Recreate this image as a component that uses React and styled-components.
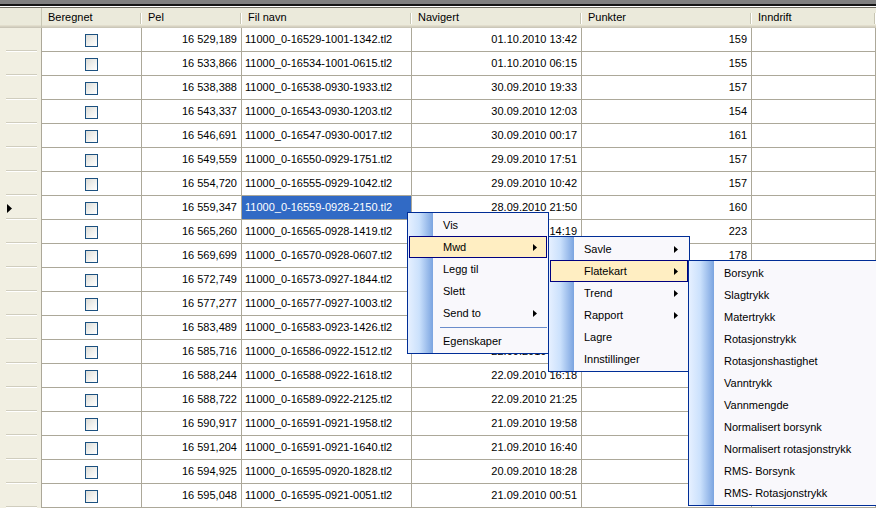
import React from "react";
import styled, { createGlobalStyle } from "styled-components";

const COLS = "42px 100px 100px 170px 170px 170px 1fr";
const GRID_LINE = "#aca899";

const GlobalStyle = createGlobalStyle`
  html, body {
    margin: 0;
    padding: 0;
    background: #fff;
  }
  body {
    font-family: "Liberation Sans", Arial, sans-serif;
    font-size: 11px;
    color: #000;
    overflow: hidden;
  }
`;

const Screen = styled.div`
  position: relative;
  width: 876px;
  height: 509px;
  overflow: hidden;
  background: #fff;
`;

const FrameEdge = styled.div`
  height: 8px;
  background: linear-gradient(
    to bottom,
    #808080 0 4px,
    #141414 4px 6px,
    #ffffff 6px 7px,
    #716f64 7px 8px
  );
`;

const HeaderRow = styled.div`
  display: grid;
  grid-template-columns: ${COLS};
  height: 20px;
`;

const HeaderCell = styled.div`
  position: relative;
  padding-left: 6px;
  line-height: 18px;
  white-space: nowrap;
  overflow: hidden;
  background: linear-gradient(
    to bottom,
    #ebeadb 0 17px,
    #e2decd 17px 18px,
    #d6d2c2 18px 19px,
    #cbc7b8 19px 20px
  );

  &::after {
    content: "";
    position: absolute;
    right: 0;
    top: 5px;
    bottom: 4px;
    width: 0;
    border-left: 1px solid #c7c5b2;
    border-right: 1px solid #fff;
  }
`;

const CornerCell = styled(HeaderCell)`
  box-sizing: border-box;
  border-right: 1px solid #c7c5b2;
  &::after {
    display: none;
  }
`;

const Row = styled.div`
  display: grid;
  grid-template-columns: ${COLS};
  height: 24px;
`;

const RowHeader = styled.div`
  box-sizing: border-box;
  display: flex;
  align-items: center;
  padding-left: 7px;
  border-right: 1px solid ${GRID_LINE};
  background:
    linear-gradient(#d0cdbe, #d0cdbe) 6px calc(100% - 1px) / 31px 1px no-repeat,
    linear-gradient(#fff, #fff) 6px 100% / 31px 1px no-repeat,
    #f1efe2;
`;

const Cell = styled.div`
  box-sizing: border-box;
  border-right: 1px solid ${GRID_LINE};
  border-bottom: 1px solid ${GRID_LINE};
  padding: 0 ${(p) => (p.$align === "right" ? "4px" : "3px")};
  line-height: 23px;
  text-align: ${(p) => p.$align || "left"};
  white-space: nowrap;
  overflow: hidden;
  background: ${(p) => (p.$selected ? "#316ac5" : "#fff")};
  color: ${(p) => (p.$selected ? "#fff" : "#000")};
`;

const CheckCell = styled(Cell)`
  display: flex;
  align-items: center;
  justify-content: center;
  padding: 1px 0 0;
`;

const Check = styled.span`
  box-sizing: border-box;
  width: 13px;
  height: 13px;
  border: 1px solid #1c5180;
  background: linear-gradient(135deg, #dcdcd7 0%, #f1f1ee 55%, #fff 100%);
`;

const Menu = styled.div`
  position: absolute;
  left: ${(p) => p.$left}px;
  top: ${(p) => p.$top}px;
  width: ${(p) => p.$width}px;
  z-index: ${(p) => p.$layer};
  box-sizing: border-box;
  padding: 1px;
  border: 1px solid #002d96;
  background:
    linear-gradient(to right, #e6f0ff 0%, #cbe1fc 45%, #7ba4e0 100%) 0 0 / 25px 100% no-repeat,
    #f9f8fc;
`;

const MenuItem = styled.div`
  box-sizing: border-box;
  height: 22px;
  display: flex;
  align-items: center;
  padding: 0 9px 0 33px;
  border: 1px solid ${(p) => (p.$active ? "#000080" : "transparent")};
  background: ${(p) => (p.$active ? "#ffeec2" : "transparent")};
  white-space: nowrap;
`;

const MenuSeparator = styled.div`
  height: 6px;
  margin-left: 31px;
  background: linear-gradient(#6a8ccb, #6a8ccb) 0 3px / 100% 1px no-repeat;
`;

const Arrow = styled.svg`
  margin-left: auto;
  flex: none;
`;

const columns = ["Beregnet", "Pel", "Fil navn", "Navigert", "Punkter", "Inndrift"];

// cells that sit fully under the open menus are left empty
const rows = [
  ["16 529,189", "11000_0-16529-1001-1342.tl2", "01.10.2010 13:42", "159"],
  ["16 533,866", "11000_0-16534-1001-0615.tl2", "01.10.2010 06:15", "155"],
  ["16 538,388", "11000_0-16538-0930-1933.tl2", "30.09.2010 19:33", "157"],
  ["16 543,337", "11000_0-16543-0930-1203.tl2", "30.09.2010 12:03", "154"],
  ["16 546,691", "11000_0-16547-0930-0017.tl2", "30.09.2010 00:17", "161"],
  ["16 549,559", "11000_0-16550-0929-1751.tl2", "29.09.2010 17:51", "157"],
  ["16 554,720", "11000_0-16555-0929-1042.tl2", "29.09.2010 10:42", "157"],
  ["16 559,347", "11000_0-16559-0928-2150.tl2", "28.09.2010 21:50", "160"],
  ["16 565,260", "11000_0-16565-0928-1419.tl2", "28.09.2010 14:19", "223"],
  ["16 569,699", "11000_0-16570-0928-0607.tl2", "", "178"],
  ["16 572,749", "11000_0-16573-0927-1844.tl2", "", ""],
  ["16 577,277", "11000_0-16577-0927-1003.tl2", "", ""],
  ["16 583,489", "11000_0-16583-0923-1426.tl2", "", ""],
  ["16 585,716", "11000_0-16586-0922-1512.tl2", "22.09.2010 15:12", ""],
  ["16 588,244", "11000_0-16588-0922-1618.tl2", "22.09.2010 16:18", ""],
  ["16 588,722", "11000_0-16589-0922-2125.tl2", "22.09.2010 21:25", ""],
  ["16 590,917", "11000_0-16591-0921-1958.tl2", "21.09.2010 19:58", ""],
  ["16 591,204", "11000_0-16591-0921-1640.tl2", "21.09.2010 16:40", ""],
  ["16 594,925", "11000_0-16595-0920-1828.tl2", "20.09.2010 18:28", ""],
  ["16 595,048", "11000_0-16595-0921-0051.tl2", "21.09.2010 00:51", ""],
];

const SELECTED_ROW = 7;

const mainMenu = [
  { label: "Vis" },
  { label: "Mwd", sub: true, active: true },
  { label: "Legg til" },
  { label: "Slett" },
  { label: "Send to", sub: true },
  { separator: true },
  { label: "Egenskaper" },
];

const mwdMenu = [
  { label: "Savle", sub: true },
  { label: "Flatekart", sub: true, active: true },
  { label: "Trend", sub: true },
  { label: "Rapport", sub: true },
  { label: "Lagre" },
  { label: "Innstillinger" },
];

const flatekartMenu = [
  "Borsynk",
  "Slagtrykk",
  "Matertrykk",
  "Rotasjonstrykk",
  "Rotasjonshastighet",
  "Vanntrykk",
  "Vannmengde",
  "Normalisert borsynk",
  "Normalisert rotasjonstrykk",
  "RMS- Borsynk",
  "RMS- Rotasjonstrykk",
].map((label) => ({ label }));

function MenuList({ items, ...pos }) {
  return (
    <Menu {...pos}>
      {items.map((item, i) =>
        item.separator ? (
          <MenuSeparator key={i} />
        ) : (
          <MenuItem key={i} $active={item.active}>
            {item.label}
            {item.sub && (
              <Arrow width="4" height="7" viewBox="0 0 4 7">
                <polygon points="0,0 4,3.5 0,7" fill="#000" />
              </Arrow>
            )}
          </MenuItem>
        )
      )}
    </Menu>
  );
}

export default function App() {
  return (
    <>
      <GlobalStyle />
      <Screen>
        <FrameEdge />
        <HeaderRow>
          <CornerCell />
          {columns.map((c) => (
            <HeaderCell key={c}>{c}</HeaderCell>
          ))}
        </HeaderRow>
        {rows.map(([pel, file, nav, points], i) => (
          <Row key={file}>
            <RowHeader>
              {i === SELECTED_ROW && (
                <svg width="5" height="9" viewBox="0 0 5 9">
                  <polygon points="0,0 5,4.5 0,9" fill="#000" />
                </svg>
              )}
            </RowHeader>
            <CheckCell>
              <Check />
            </CheckCell>
            <Cell $align="right">{pel}</Cell>
            <Cell $selected={i === SELECTED_ROW}>{file}</Cell>
            <Cell $align="right">{nav}</Cell>
            <Cell $align="right">{points}</Cell>
            <Cell />
          </Row>
        ))}

        <MenuList items={mainMenu} $left={407} $top={212} $width={142} $layer={1} />
        <MenuList items={mwdMenu} $left={548} $top={236} $width={142} $layer={2} />
        <MenuList items={flatekartMenu} $left={688} $top={260} $width={220} $layer={3} />
      </Screen>
    </>
  );
}
